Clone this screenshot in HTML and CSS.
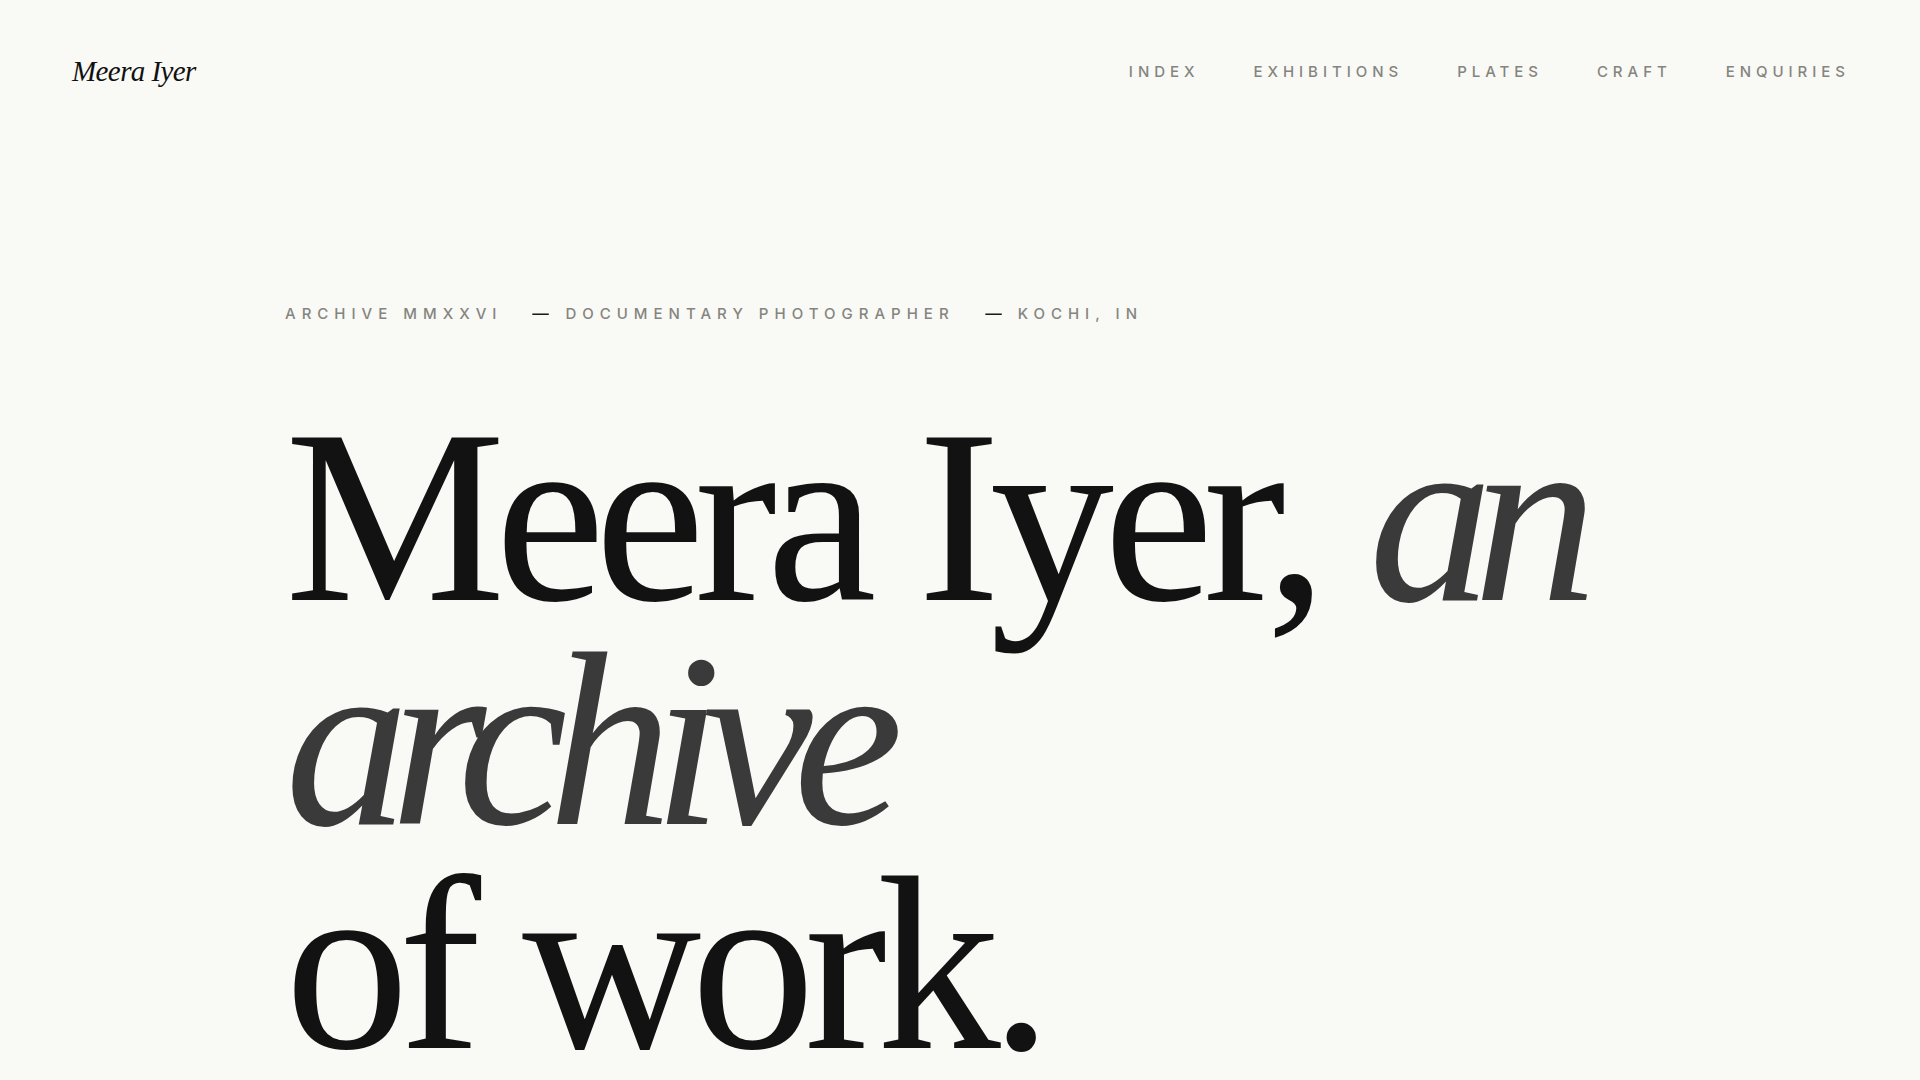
FILE: index.html
```html
<!DOCTYPE html>
<html lang="en">
<head>
    <meta charset="UTF-8">
    <meta name="viewport" content="width=device-width, initial-scale=1.0">
    <title>Meera Iyer — Archive</title>
    <link rel="stylesheet" href="styles.css">
</head>
<body>
    <header class="site-header">
        <a href="#" class="logo">Meera Iyer</a>
        <nav class="nav">
            <a href="#">Index</a>
            <a href="#">Exhibitions</a>
            <a href="#">Plates</a>
            <a href="#">Craft</a>
            <a href="#">Enquiries</a>
        </nav>
    </header>

    <section class="hero">
        <p class="meta">
            <span class="item">Archive MMXXVI</span>
            <span class="item"><span class="dash">—</span>Documentary Photographer</span>
            <span class="item"><span class="dash">—</span>Kochi, IN</span>
        </p>
        <h1 class="headline">Meera Iyer, <em>an<br>archive</em><br>of work.</h1>
    </section>
</body>
</html>
```

FILE: styles.css
```css
body {
    margin: 0;
    background-color: #f9f9f6;
    color: #121212;
    font-family: "Liberation Serif", serif;
    overflow: hidden;
}
a {
    color: inherit;
    text-decoration: none;
}
.site-header {
    display: flex;
    justify-content: space-between;
    align-items: center;
    height: 142px;
    padding: 0 75px 0 72px;
}
.logo {
    font-style: italic;
    font-size: 29px;
    line-height: 1;
    letter-spacing: -0.02em;
    color: #111;
}
.nav {
    display: flex;
    gap: 59px;
}
.nav a {
    font-family: Inter, "Liberation Sans", sans-serif;
    font-size: 15px;
    font-weight: 500;
    line-height: 1;
    letter-spacing: 0.33em;
    text-transform: uppercase;
    color: #85857e;
    margin-right: -0.33em;
}
.hero {
    padding-left: 285px;
}
.meta {
    display: flex;
    align-items: center;
    gap: 31px;
    margin: 162px 0 0;
    font-family: Inter, "Liberation Sans", sans-serif;
    font-size: 15px;
    font-weight: 500;
    line-height: 20px;
    letter-spacing: 0.4em;
    text-transform: uppercase;
    color: #85857e;
}
.meta .dash {
    display: inline-block;
    margin-right: 17px;
    color: #1a1a1a;
    letter-spacing: 0;
    transform: scaleX(1.1);
}
.headline {
    margin: 81px 0 0;
    font-weight: 400;
    font-size: 248px;
    line-height: 224px;
    letter-spacing: -0.042em;
    color: #121212;
}
.headline em {
    color: #3a3a3a;
    letter-spacing: -0.078em;
}
```
